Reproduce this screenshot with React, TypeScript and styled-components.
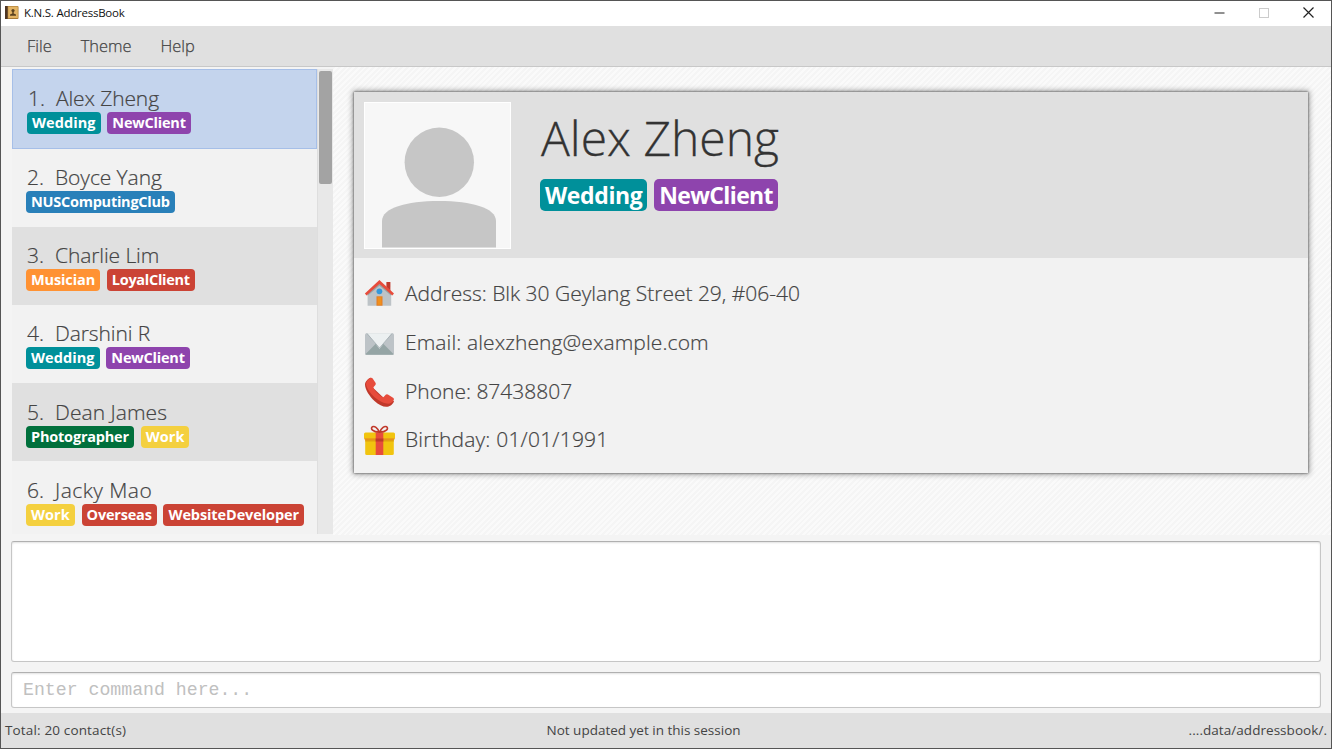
import React from 'react';
import styled, { createGlobalStyle, css } from 'styled-components';

const Global = createGlobalStyle`
  * { box-sizing: border-box; }
  body { margin: 0; background: #fff; font-family: 'Open Sans', sans-serif; }
`;

const Window = styled.div`
  width: 1332px;
  height: 749px;
  display: flex;
  flex-direction: column;
  border: 1px solid #555;
  background: #f4f4f4;
  overflow: hidden;
  color: #444;
`;

const TitleBar = styled.header`
  flex: 0 0 25px;
  display: flex;
  align-items: center;
  justify-content: space-between;
  padding: 0 17px 2px 3px;
  background: #fff;
`;

const AppTitle = styled.div`
  display: flex;
  align-items: center;
  gap: 5px;
  font-size: 11.5px;
  line-height: 16px;
  letter-spacing: -0.24px;
  color: #111;
`;

const WindowButtons = styled.div`
  display: flex;
  align-items: center;
  gap: 34px;
`;

const MenuBar = styled.nav`
  flex: 0 0 41px;
  display: flex;
  align-items: center;
  gap: 29px;
  padding: 0 0 2px 26px;
  background: #e0e0e0;
  border-bottom: 1px solid #c8c8c8;
`;

const MenuItem = styled.span`
  font-size: 16.4px;
  font-weight: 300;
  -webkit-text-stroke: 0.25px #444;
`;

const Main = styled.main`
  flex: 0 0 468px;
  display: flex;
  align-items: stretch;
`;

const ListPane = styled.section`
  flex: 0 0 332px;
  display: flex;
  padding: 2px 0 0 11px;
`;

const ContactList = styled.div`
  flex: 0 0 305px;
  height: 465px;
  overflow: hidden;
`;

const ScrollTrack = styled.div`
  flex: 1;
  height: 465px;
  padding: 2px 1px 0 1px;
  background: #e8e8e8;
  border-left: 1px solid #dedede;
`;

const ScrollThumb = styled.div`
  height: 113px;
  border-radius: 2px;
  background: #a3a3a3;
`;

const ContactRow = styled.div<{ $selected: boolean; $dark: boolean }>`
  height: 78.1px;
  padding: 14.3px 14px 0;
  background: ${p => (p.$dark ? '#e0e0e0' : '#f2f2f2')};
  ${p =>
    p.$selected &&
    css`
      height: 80px;
      padding-top: 14px;
      background: #c4d4ed;
      border: 1px solid #a6bfe8;
    `}
`;

const ContactName = styled.div<{ $spacing: number }>`
  display: flex;
  height: 28px;
  padding-left: 1px;
  font-size: 21px;
  line-height: 29px;
  font-weight: 300;
  letter-spacing: ${p => p.$spacing}px;
  -webkit-text-stroke: 0.2px #444;
  white-space: nowrap;
`;

const ContactIndex = styled.span`
  width: 28px;
  letter-spacing: 0;
`;

const Tags = styled.div`
  display: flex;
  gap: 6.8px;
`;

const Tag = styled.span<{ $color: string; $spacing: number; $large?: boolean }>`
  height: ${p => (p.$large ? 32 : 22)}px;
  padding: 0 5px;
  border-radius: ${p => (p.$large ? 5 : 4)}px;
  background: ${p => p.$color};
  color: #fff;
  font-size: ${p => (p.$large ? 23 : 14.5)}px;
  line-height: ${p => (p.$large ? 32 : 22)}px;
  letter-spacing: ${p => p.$spacing}px;
  font-weight: 700;
  white-space: nowrap;
`;

const DetailPane = styled.section`
  flex: 1;
  padding: 25px 23px 0 21px;
  background: repeating-linear-gradient(135deg, #f5f5f5 0 2px, #fafafa 2px 4px);
`;

const Card = styled.article`
  height: 381px;
  background: #f2f2f2;
  box-shadow: 0 0 2px #444, 0 0 6px 1px rgba(0, 0, 0, 0.4);
`;

const CardHeader = styled.div`
  height: 166px;
  display: flex;
  padding: 10px;
  gap: 29px;
  background: #e0e0e0;
`;

const AvatarImage = styled.svg`
  flex: 0 0 147px;
`;

const Person = styled.div``;

const PersonName = styled.h1`
  margin: 5px 0 10px 1px;
  height: 62px;
  font-size: 48px;
  line-height: 62px;
  font-weight: 300;
  color: #333;
  -webkit-text-stroke: 0.3px #333;
`;

const Facts = styled.div`
  padding: 11px 10px;
`;

const Fact = styled.div<{ $spacing?: number }>`
  height: 48.7px;
  display: flex;
  align-items: center;
  gap: 9px;
  font-size: 21px;
  font-weight: 300;
  letter-spacing: ${p => p.$spacing ?? 0}px;
  -webkit-text-stroke: 0.2px #444;
  white-space: nowrap;
`;

const FactIcon = styled.svg.attrs({ width: 32, height: 32, viewBox: '0 0 32 32' })`
  flex: 0 0 32px;
`;

const inputFrame = css`
  background: #fff;
  border: 1px solid #c6c6c6;
  border-top-color: #b0b0b0;
  border-radius: 3px;
  box-shadow: inset 0 1px 2px rgba(0, 0, 0, 0.12);
`;

const ResultBox = styled.div`
  flex: 0 0 121px;
  margin: 6px 10px 0;
  ${inputFrame}
`;

const CommandBox = styled.div`
  flex: 0 0 36px;
  margin: 10px 10px 5px;
  padding-left: 11px;
  ${inputFrame}
  font: 18.2px/34px 'Liberation Mono', monospace;
  color: #c0c0c0;
`;

const StatusBar = styled.footer`
  flex: 1;
  display: grid;
  grid-template-columns: 541.5px auto 1fr;
  align-items: center;
  padding: 0 4px 1px;
  background: #e0e0e0;
  font-size: 13.5px;
`;

const Total = styled.span`
  letter-spacing: 0.15px;
`;

const FilePath = styled.span`
  text-align: right;
  letter-spacing: 0.05px;
`;

function BookIcon() {
  return (
    <svg width="15" height="15" viewBox="0 0 15 15">
      <rect x="1" y="1" width="13.5" height="13" rx="1" fill="#a87a35" />
      <rect x="1" y="1" width="2.6" height="13" fill="#4d3524" />
      <rect x="4.2" y="1.6" width="9.6" height="11.4" fill="#e3b464" />
      <circle cx="9" cy="5.6" r="1.6" fill="#5b421f" />
      <path d="M8.300 6.500h1.400v2l2.300 1v1.200H6v-1.200l2.300-1z" fill="#5b421f" />
    </svg>
  );
}

function Avatar() {
  return (
    <AvatarImage width="147" height="147" viewBox="0 0 147 147">
      <rect x="0.5" y="0.5" width="146" height="146" fill="#f7f7f7" stroke="#fff" />
      <circle cx="75.3" cy="60.3" r="34.7" fill="#c6c6c6" />
      <path d="M18 145.5V119C18 106 42 99 75 99s57 7 57 20v26.500z" fill="#c6c6c6" />
    </AvatarImage>
  );
}

function HouseIcon() {
  return (
    <FactIcon>
      <path d="M22.400 5h4v9l-4-4z" fill="#c0392b" />
      <path d="M3.600 16.500 15.400 6l11.800 10.500v12.200H3.600z" fill="#bdc3c7" />
      <path d="M3.600 16.800 15.400 6.500l11.800 10.300v2L15.400 8.800 3.600 18.800z" fill="#95a5a6" />
      <path d="M15.400 3 30 16.600 28.300 18.500 15.400 7 2.500 18.500.900 16.600z" fill="#e74c3c" />
      <circle cx="15.400" cy="14.300" r="2.900" fill="#3498db" />
      <rect x="12.500" y="19.300" width="6" height="9.400" fill="#e67e22" />
      <rect x="13.600" y="20.300" width="3.800" height="7.400" fill="#f0901c" />
    </FactIcon>
  );
}

function MailIcon() {
  return (
    <FactIcon>
      <rect x="1" y="7.300" width="29" height="21.500" rx="1.500" fill="#bdc3c7" />
      <path d="M1.400 28.200 12 17.500h7l10.700 10.700q-.5.600-1.400.6H2.600q-.8 0-1.200-.6z" fill="#95a5a5" />
      <path d="M3.200 7.300h24.600L15.500 22.700z" fill="#ecf0f1" />
      <path d="M3 7.500 15.500 22 28 7.500" fill="none" stroke="#a5afb3" strokeWidth="0.900" />
    </FactIcon>
  );
}

function PhoneIcon() {
  return (
    <FactIcon>
      <path
        d="M6.800 2.700C4.500 3.200 1 6.500 1 9.500c0 5 4.500 12 9.500 16.500 4.500 4 9.300 6.300 13 5.700 3-.5 6-3 6.500-5.700L23 26 6 10z"
        fill="#c0392b"
      />
      <path
        d="M6.500 2.800q1.200-.5 2 .5l3 4.500q.9 1.400-.3 2.500L9.400 12.200c.3 3 7 9.700 10 10l2.300-2.500q1-.9 2.200-.1l5.500 3.500q1 .9.300 2.200c-1.500 2.500-4.200 3.800-7 3.300C14.500 27.300 4.500 18 2.200 10.200 1.500 7 4.300 4 6.500 2.800z"
        fill="#e74c3c"
      />
    </FactIcon>
  );
}

function GiftIcon() {
  return (
    <FactIcon>
      <rect x="1.200" y="15.500" width="28.600" height="16.500" rx="1.500" fill="#f1c40f" />
      <rect x="1.200" y="15.500" width="28.600" height="3" fill="#e0a010" />
      <rect x="0" y="9.500" width="31" height="6.800" rx="1.500" fill="#f1c40f" />
      <rect x="0.500" y="15.500" width="30" height="1" fill="#e67e22" />
      <rect x="11.700" y="9.500" width="7.600" height="22.500" fill="#e74c3c" />
      <rect x="11.700" y="15.500" width="7.600" height="3" fill="#c0392b" />
      <path
        d="M15.200 9.100C13.500 4.500 10.500 2.700 8.300 3.800 6 5.500 8.800 9.100 15.200 9.100zM15.800 9.100C17.500 4.500 20.500 2.700 22.700 3.800 25 5.500 22.200 9.100 15.800 9.100z"
        fill="none"
        stroke="#c0392b"
        strokeWidth="1.600"
      />
    </FactIcon>
  );
}

interface TagData {
  label: string;
  color: string;
  spacing: number;
}

const teal = '#00909a';
const purple = '#8e44ad';
const red = '#cb4335';
const yellow = '#f4d03f';

const wedding: TagData = { label: 'Wedding', color: teal, spacing: 0.06 };
const newClient: TagData = { label: 'NewClient', color: purple, spacing: -0.2 };
const work: TagData = { label: 'Work', color: yellow, spacing: 0.05 };

const contacts: { name: string; spacing: number; tags: TagData[] }[] = [
  { name: 'Alex Zheng', spacing: -0.12, tags: [wedding, newClient] },
  { name: 'Boyce Yang', spacing: -0.08, tags: [{ label: 'NUSComputingClub', color: '#2980b9', spacing: -0.25 }] },
  {
    name: 'Charlie Lim',
    spacing: -0.1,
    tags: [
      { label: 'Musician', color: '#ff9233', spacing: -0.12 },
      { label: 'LoyalClient', color: red, spacing: -0.3 },
    ],
  },
  { name: 'Darshini R', spacing: -0.1, tags: [wedding, newClient] },
  { name: 'Dean James', spacing: 0.05, tags: [{ label: 'Photographer', color: '#00703c', spacing: -0.2 }, work] },
  {
    name: 'Jacky Mao',
    spacing: 0.45,
    tags: [
      work,
      { label: 'Overseas', color: red, spacing: -0.2 },
      { label: 'WebsiteDeveloper', color: red, spacing: -0.1 },
    ],
  },
];

export default function App() {
  return (
    <>
      <Global />
      <Window>
        <TitleBar>
          <AppTitle>
            <BookIcon />
            K.N.S. AddressBook
          </AppTitle>
          <WindowButtons>
            <svg width="11" height="11" viewBox="0 0 11 11">
              <path d="M0.500 6h10" stroke="#222" />
            </svg>
            <svg width="10" height="10" viewBox="0 0 10 10">
              <rect x="0.500" y="0.500" width="9" height="9" fill="none" stroke="#ccc" />
            </svg>
            <svg width="11" height="11" viewBox="0 0 11 11">
              <path d="M0.500 0.500l10 10M10.500 0.500l-10 10" stroke="#222" strokeWidth="1.200" />
            </svg>
          </WindowButtons>
        </TitleBar>
        <MenuBar>
          <MenuItem>File</MenuItem>
          <MenuItem>Theme</MenuItem>
          <MenuItem>Help</MenuItem>
        </MenuBar>
        <Main>
          <ListPane>
            <ContactList>
              {contacts.map((contact, i) => (
                <ContactRow key={contact.name} $selected={i === 0} $dark={i % 2 === 0}>
                  <ContactName $spacing={contact.spacing}>
                    <ContactIndex>{i + 1}.</ContactIndex>
                    {contact.name}
                  </ContactName>
                  <Tags>
                    {contact.tags.map(tag => (
                      <Tag key={tag.label} $color={tag.color} $spacing={tag.spacing}>
                        {tag.label}
                      </Tag>
                    ))}
                  </Tags>
                </ContactRow>
              ))}
            </ContactList>
            <ScrollTrack>
              <ScrollThumb />
            </ScrollTrack>
          </ListPane>
          <DetailPane>
            <Card>
              <CardHeader>
                <Avatar />
                <Person>
                  <PersonName>Alex Zheng</PersonName>
                  <Tags>
                    <Tag $large $color={teal} $spacing={-0.38}>Wedding</Tag>
                    <Tag $large $color={purple} $spacing={-0.62}>NewClient</Tag>
                  </Tags>
                </Person>
              </CardHeader>
              <Facts>
                <Fact $spacing={-0.02}>
                  <HouseIcon />
                  Address: Blk 30 Geylang Street 29, #06-40
                </Fact>
                <Fact $spacing={0.1}>
                  <MailIcon />
                  Email: alexzheng@example.com
                </Fact>
                <Fact>
                  <PhoneIcon />
                  Phone: 87438807
                </Fact>
                <Fact $spacing={0.2}>
                  <GiftIcon />
                  Birthday: 01/01/1991
                </Fact>
              </Facts>
            </Card>
          </DetailPane>
        </Main>
        <ResultBox />
        <CommandBox>Enter command here...</CommandBox>
        <StatusBar>
          <Total>Total: 20 contact(s)</Total>
          <span>Not updated yet in this session</span>
          <FilePath>....data/addressbook/.</FilePath>
        </StatusBar>
      </Window>
    </>
  );
}
